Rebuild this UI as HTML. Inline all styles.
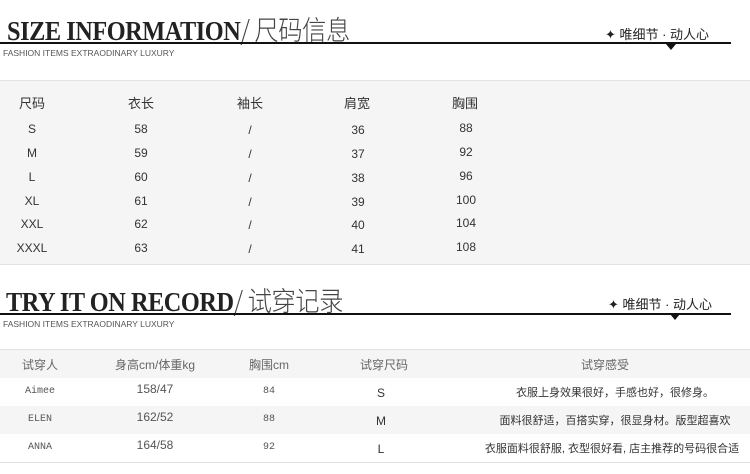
<!DOCTYPE html>
<html><head><meta charset="utf-8"><style>
body{margin:0;width:750px;height:474px;background:#fff;position:relative;overflow:hidden;font-family:"Liberation Sans","Noto Sans CJK SC",sans-serif;color:#333}
.a{position:absolute;white-space:nowrap}
.t{font-family:"Liberation Serif","Noto Sans CJK SC",serif;font-weight:bold;font-size:27px;line-height:30px;color:#222;letter-spacing:-0.5px;transform:scaleX(0.9);transform-origin:left}
.t span{font-family:"Noto Sans CJK SC",sans-serif;font-weight:300;color:#444;font-size:27px}
.sub{font-size:8.5px;color:#555}
.line{position:absolute;height:2px;background:#111;left:0;width:731px}
.r{font-size:13px;color:#222}
.tri{position:absolute;width:0;height:0;border-left:5px solid transparent;border-right:5px solid transparent;border-top:6px solid #111}
.c{position:absolute;transform:translateX(-50%);font-size:12px;color:#333;white-space:nowrap}
.g{position:absolute;left:0;width:750px;background:#f5f5f5}
.b{position:absolute;left:0;width:750px;height:1px;background:#e2e2e2}
.m{font-family:"Liberation Mono",monospace;font-size:10px;color:#555}
</style></head><body>
<div class="a t" style="left:7px;top:14px">SIZE INFORMATION<span>/ 尺码信息</span></div>
<div class="line" style="top:42px"></div>
<div class="a sub" style="left:3px;top:48px">FASHION ITEMS EXTRAODINARY LUXURY</div>
<div class="a r" style="left:605px;top:24px">✦ 唯细节 · 动人心</div>
<div class="tri" style="left:666px;top:44px"></div>

<div class="g" style="top:80px;height:184px"></div>
<div class="b" style="top:80px"></div><div class="b" style="top:264px"></div>
<div class="c" style="left:32px;top:93px;font-size:13px">尺码</div>
<div class="c" style="left:141px;top:93px;font-size:13px">衣长</div>
<div class="c" style="left:250px;top:93px;font-size:13px">袖长</div>
<div class="c" style="left:357px;top:93px;font-size:13px">肩宽</div>
<div class="c" style="left:465px;top:93px;font-size:13px">胸围</div>

<div class="c" style="left:32px;top:122px">S</div><div class="c" style="left:141px;top:122px">58</div><div class="c" style="left:250px;top:123px">/</div><div class="c" style="left:358px;top:123px">36</div><div class="c" style="left:466px;top:121px">88</div>
<div class="c" style="left:32px;top:146px">M</div><div class="c" style="left:141px;top:146px">59</div><div class="c" style="left:250px;top:147px">/</div><div class="c" style="left:358px;top:147px">37</div><div class="c" style="left:466px;top:145px">92</div>
<div class="c" style="left:32px;top:170px">L</div><div class="c" style="left:141px;top:170px">60</div><div class="c" style="left:250px;top:171px">/</div><div class="c" style="left:358px;top:171px">38</div><div class="c" style="left:466px;top:169px">96</div>
<div class="c" style="left:32px;top:194px">XL</div><div class="c" style="left:141px;top:194px">61</div><div class="c" style="left:250px;top:195px">/</div><div class="c" style="left:358px;top:195px">39</div><div class="c" style="left:466px;top:193px">100</div>
<div class="c" style="left:32px;top:217px">XXL</div><div class="c" style="left:141px;top:217px">62</div><div class="c" style="left:250px;top:218px">/</div><div class="c" style="left:358px;top:218px">40</div><div class="c" style="left:466px;top:216px">104</div>
<div class="c" style="left:32px;top:241px">XXXL</div><div class="c" style="left:141px;top:241px">63</div><div class="c" style="left:250px;top:242px">/</div><div class="c" style="left:358px;top:242px">41</div><div class="c" style="left:466px;top:240px">108</div>

<div class="a t" style="left:6px;top:285px">TRY IT ON RECORD<span>/ 试穿记录</span></div>
<div class="line" style="top:313px"></div>
<div class="a sub" style="left:3px;top:319px">FASHION ITEMS EXTRAODINARY LUXURY</div>
<div class="a r" style="left:608px;top:294px">✦ 唯细节 · 动人心</div>
<div class="tri" style="left:670px;top:314px"></div>

<div class="b" style="top:349px"></div>
<div class="g" style="top:350px;height:28px"></div>
<div class="g" style="top:406px;height:28px"></div>
<div class="b" style="top:462px"></div>
<div class="c" style="left:40px;top:356px;color:#666">试穿人</div>
<div class="c" style="left:155px;top:356px;color:#666">身高cm/体重kg</div>
<div class="c" style="left:269px;top:356px;color:#666">胸围cm</div>
<div class="c" style="left:384px;top:356px;color:#666">试穿尺码</div>
<div class="c" style="left:605px;top:356px;color:#666">试穿感受</div>

<div class="c m" style="left:40px;top:386px">Aimee</div><div class="c" style="left:155px;top:382px;color:#555">158/47</div><div class="c m" style="left:269px;top:386px">84</div><div class="c" style="left:381px;top:386px">S</div><div class="c" style="left:615px;top:384px;font-size:11px">衣服上身效果很好，手感也好，很修身。</div>
<div class="c m" style="left:40px;top:414px">ELEN</div><div class="c" style="left:155px;top:410px;color:#555">162/52</div><div class="c m" style="left:269px;top:414px">88</div><div class="c" style="left:381px;top:414px">M</div><div class="c" style="left:615px;top:412px;font-size:11px">面料很舒适，百搭实穿，很显身材。版型超喜欢</div>
<div class="c m" style="left:40px;top:442px">ANNA</div><div class="c" style="left:155px;top:438px;color:#555">164/58</div><div class="c m" style="left:269px;top:442px">92</div><div class="c" style="left:381px;top:442px">L</div><div class="c" style="left:612px;top:440px;font-size:11px">衣服面料很舒服, 衣型很好看, 店主推荐的号码很合适</div>
</body></html>
